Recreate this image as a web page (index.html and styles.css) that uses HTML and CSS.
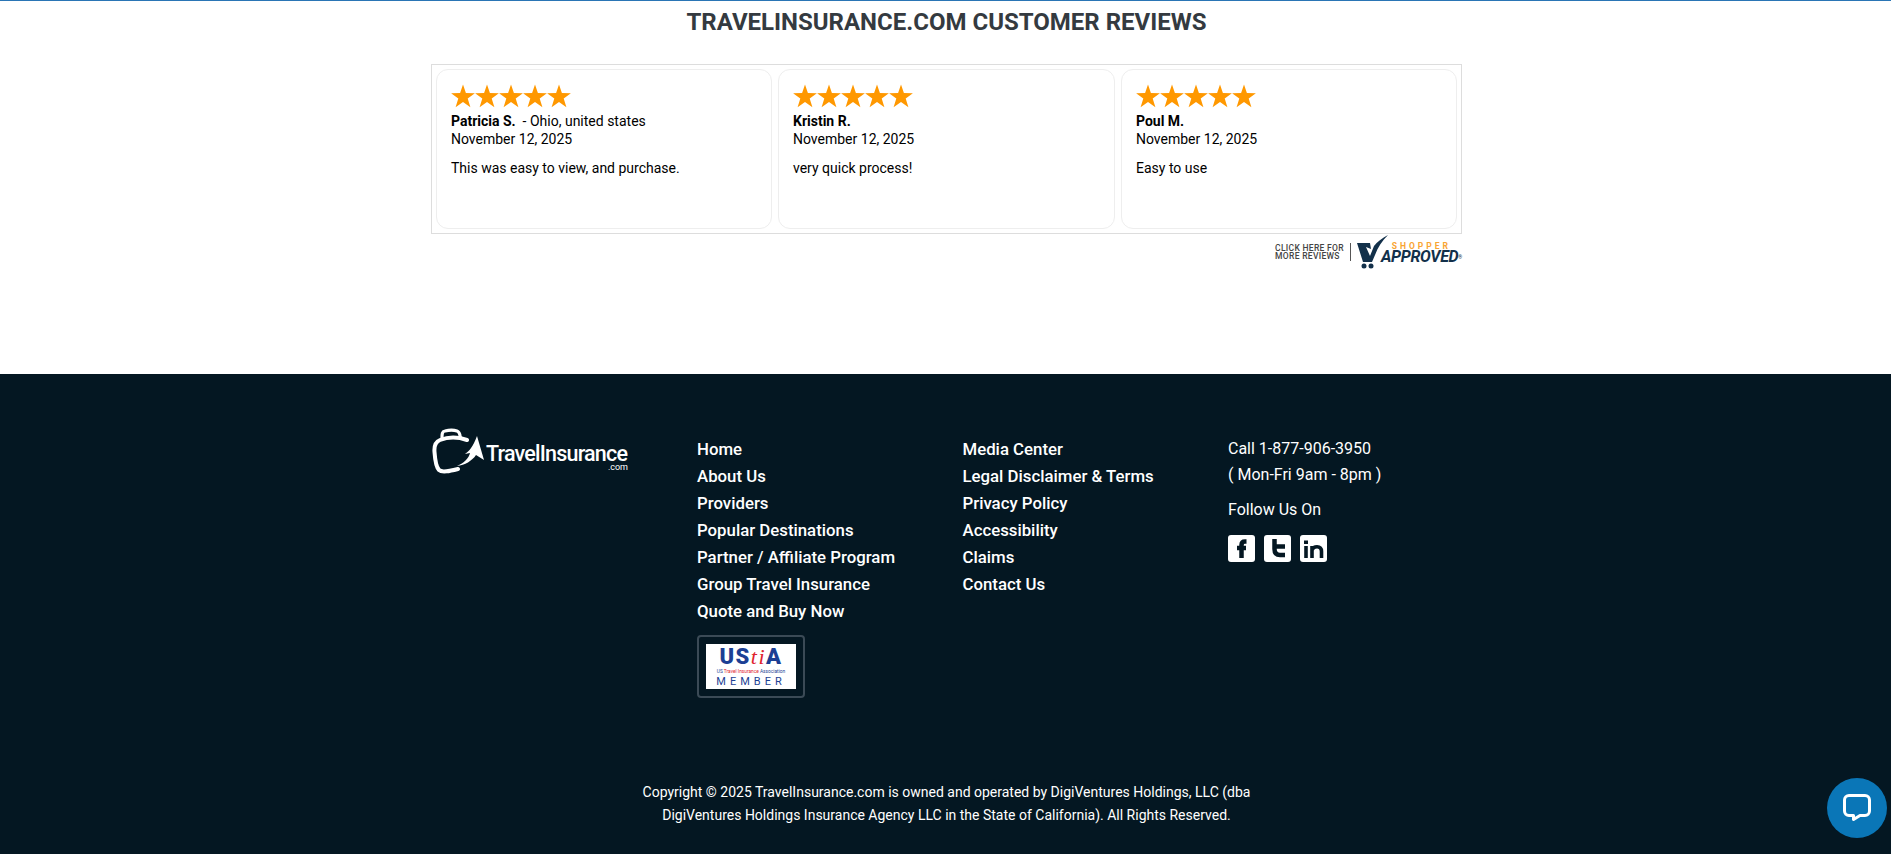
FILE: index.html
```html
<!DOCTYPE html>
<html lang="en">
<head>
    <meta charset="UTF-8">
    <meta name="viewport" content="width=device-width, initial-scale=1.0">
    <title>TravelInsurance.com</title>
    <link rel="stylesheet" href="styles.css">
</head>
<body>

<svg width="0" height="0" class="svg-defs">
    <symbol id="star" viewBox="0 0 24 24">
        <path d="M12 .6l2.9 8.5 9 .1-7.2 5.4 2.7 8.7L12 18.1l-7.4 5.2 2.7-8.7L.1 9.2l9-.1z"/>
    </symbol>
</svg>

<!-- Reviews -->
<section class="reviews">
    <h2 class="reviews-title">TRAVELINSURANCE.COM CUSTOMER REVIEWS</h2>

    <div class="reviews-box">
        <div class="review-card">
            <div class="stars">
                <svg><use href="#star"/></svg><svg><use href="#star"/></svg><svg><use href="#star"/></svg><svg><use href="#star"/></svg><svg><use href="#star"/></svg>
            </div>
            <div class="review-line"><b>Patricia S.</b>&nbsp; - Ohio, united states</div>
            <div class="review-line">November 12, 2025</div>
            <p class="review-text">This was easy to view, and purchase.</p>
        </div>
        <div class="review-card">
            <div class="stars">
                <svg><use href="#star"/></svg><svg><use href="#star"/></svg><svg><use href="#star"/></svg><svg><use href="#star"/></svg><svg><use href="#star"/></svg>
            </div>
            <div class="review-line"><b>Kristin R.</b></div>
            <div class="review-line">November 12, 2025</div>
            <p class="review-text">very quick process!</p>
        </div>
        <div class="review-card">
            <div class="stars">
                <svg><use href="#star"/></svg><svg><use href="#star"/></svg><svg><use href="#star"/></svg><svg><use href="#star"/></svg><svg><use href="#star"/></svg>
            </div>
            <div class="review-line"><b>Poul M.</b></div>
            <div class="review-line">November 12, 2025</div>
            <p class="review-text">Easy to use</p>
        </div>
    </div>

    <!-- Shopper Approved badge -->
    <a href="#" class="approved">
        <span class="approved-click">CLICK HERE FOR<br>MORE REVIEWS</span>
        <span class="approved-sep"></span>
        <svg class="approved-mark" width="32" height="34" viewBox="0 0 32 34">
            <path d="M0 8H13L14 14 9 12 13 21 17 11C20 7 25 3 31 0 25 6 21 12 18 20L15 27H6Z" fill="#12304a"/>
            <circle cx="7" cy="31" r="2.500" fill="#12304a"/>
            <circle cx="14" cy="31" r="2.500" fill="#12304a"/>
        </svg>
        <span class="approved-name">
            <span class="approved-shopper">SHOPPER</span>
            <span class="approved-word">APPROVED<sup>®</sup></span>
        </span>
    </a>
</section>

<!-- Footer -->
<footer class="site-footer">
    <div class="footer-grid">
        <div class="footer-logo">
            <svg width="200" height="48" viewBox="0 0 200 48" fill="none">
                <path d="M35 13C26 10 16 10 8 13 3 15 2 19 2.500 25 3 32 4 40 7 43 10 46 18 44 26 42" stroke="#fff" stroke-width="4" stroke-linecap="round"/>
                <path d="M10 10.700C10 7 10 4.500 13 4 17 3 22 3 25 4 28 5 28 8 28.300 10.700" stroke="#fff" stroke-width="3.200" stroke-linecap="round"/>
                <path d="M45 9L52 33 44 28C40 34 33 38 25 39 32 36 37 31 38 26L33 27C37 24 41 20 45 9Z" fill="#fff"/>
                <text class="logo-name" x="54" y="34" textLength="142">TravelInsurance</text>
                <text class="logo-com" x="196" y="43" text-anchor="end">.com</text>
            </svg>
        </div>

        <ul class="footer-links">
            <li><a href="#">Home</a></li>
            <li><a href="#">About Us</a></li>
            <li><a href="#">Providers</a></li>
            <li><a href="#">Popular Destinations</a></li>
            <li><a href="#">Partner / Affiliate Program</a></li>
            <li><a href="#">Group Travel Insurance</a></li>
            <li><a href="#">Quote and Buy Now</a></li>
            <li class="ustia-row">
                <a href="#" class="ustia">
                    <span class="ustia-inner">
                        <span class="ustia-name">US<i>ti</i>A</span>
                        <span class="ustia-sub">US <em>Travel Insurance</em> Association</span>
                        <span class="ustia-member">MEMBER</span>
                    </span>
                </a>
            </li>
        </ul>

        <ul class="footer-links">
            <li><a href="#">Media Center</a></li>
            <li><a href="#">Legal Disclaimer &amp; Terms</a></li>
            <li><a href="#">Privacy Policy</a></li>
            <li><a href="#">Accessibility</a></li>
            <li><a href="#">Claims</a></li>
            <li><a href="#">Contact Us</a></li>
        </ul>

        <div class="footer-contact">
            <p class="contact-phone">Call 1-877-906-3950<br>( Mon-Fri 9am - 8pm )</p>
            <p class="contact-follow">Follow Us On</p>
            <div class="social">
                <a href="#" class="social-icon">
                    <svg width="27" height="27" viewBox="0 0 27 27" fill="none" stroke="#041722" stroke-width="4.500">
                        <path d="M18.500 6.500H17C14.500 6.500 13.500 7.500 13.500 10V23"/>
                        <path d="M9 13H18"/>
                    </svg>
                </a>
                <a href="#" class="social-icon">
                    <svg width="27" height="27" viewBox="0 0 27 27" fill="none" stroke="#041722" stroke-width="4.500">
                        <path d="M10.500 4V14C10.500 18 12.500 20 16 20H21"/>
                        <path d="M10.500 11.500H21"/>
                    </svg>
                </a>
                <a href="#" class="social-icon">
                    <svg width="27" height="27" viewBox="0 0 27 27" fill="none" stroke="#041722" stroke-width="3.600">
                        <path d="M6 11V23"/>
                        <path d="M6 5.500V9" stroke-width="4"/>
                        <path d="M12 23V11M12 15C13 12.500 15 11.800 17 11.800 20 11.800 21.500 13.500 21.500 16.500V23"/>
                    </svg>
                </a>
            </div>
        </div>
    </div>

    <p class="copyright">Copyright © 2025 TravelInsurance.com is owned and operated by DigiVentures Holdings, LLC (dba DigiVentures Holdings Insurance Agency LLC in the State of California). All Rights Reserved.</p>
</footer>

<!-- Chat widget -->
<a href="#" class="chat-btn">
    <svg width="30" height="30" viewBox="0 0 30 30" fill="none">
        <path d="M7 2.500H23A4.500 4.500 0 0 1 27.500 7V18A4.500 4.500 0 0 1 23 22.500H18L11.500 26.500V22.500H7A4.500 4.500 0 0 1 2.500 18V7A4.500 4.500 0 0 1 7 2.500Z" stroke="#fff" stroke-width="3" stroke-linejoin="round"/>
    </svg>
</a>

</body>
</html>
```

FILE: styles.css
```css
* {
    box-sizing: border-box;
}

body {
    margin: 0;
    font-family: Roboto, "Liberation Sans", sans-serif;
    font-size: 14px;
    color: #000;
    background-color: #fff;
    border-top: 1px solid #2a75b5;
}

a {
    color: inherit;
    text-decoration: none;
}

ul {
    list-style: none;
    margin: 0;
    padding: 0;
}

.svg-defs {
    position: absolute;
}

/* reviews */
.reviews {
    width: 1033px;
    height: 373px;
    margin: 0 auto;
    padding-left: 2px;
}

.reviews-title {
    margin: 0;
    padding-top: 7px;
    height: 63px;
    font-size: 24px;
    line-height: 29px;
    font-weight: 700;
    text-align: center;
    color: #343a40;
}

.reviews-box {
    display: grid;
    grid-template-columns: 336px 337px 336px;
    gap: 6px;
    height: 170px;
    padding: 4px;
    border: 1px solid #ddd;
}

.review-card {
    padding: 14px 14px;
    border: 1px solid #eee;
    border-radius: 12px;
}

.stars {
    display: flex;
    height: 24px;
    margin-bottom: 4px;
    fill: #ff9800;
}

.stars svg {
    width: 24px;
    height: 24px;
}

.review-line {
    line-height: 18px;
}

.review-text {
    margin: 11px 0 0;
    line-height: 18px;
}

/* shopper approved */
.approved {
    display: flex;
    justify-content: flex-end;
    align-items: center;
    height: 36px;
}

.approved-click {
    font-size: 8.500px;
    line-height: 8px;
    font-weight: 500;
    letter-spacing: 0.3px;
    color: #444;
}

.approved-sep {
    width: 1px;
    height: 18px;
    margin: 0 6px;
    background-color: #555;
}

.approved-mark {
    margin-right: -8px;
}

.approved-name {
    display: flex;
    flex-direction: column;
    align-items: flex-end;
    padding-top: 2px;
}

.approved-shopper {
    margin-right: 11px;
    font-size: 8.500px;
    line-height: 8px;
    font-weight: 700;
    letter-spacing: 3px;
    color: #f9a533;
}

.approved-word {
    font-size: 16px;
    line-height: 14px;
    font-weight: 700;
    font-style: italic;
    letter-spacing: -0.3px;
    color: #12304a;
}

.approved-word sup {
    font-size: 5px;
    font-style: normal;
    vertical-align: top;
}

/* footer */
.site-footer {
    height: 480px;
    padding-top: 53px;
    background-color: #041722;
    color: #fff;
}

.footer-grid {
    display: grid;
    grid-template-columns: repeat(4, 265.5px);
    width: 1062px;
    height: 354px;
    margin: 0 auto;
    padding-left: 17px;
}

.footer-logo {
    height: 48px;
}

.logo-name {
    font-size: 21.500px;
    font-weight: 500;
    fill: #fff;
}

.logo-com {
    font-size: 9px;
    fill: #fff;
}

.footer-links {
    padding-top: 9px;
}

.footer-links li {
    font-size: 16.800px;
    line-height: 27px;
    font-weight: 500;
}

.footer-links .ustia-row {
    margin-top: 10px;
    line-height: 0;
}

.ustia {
    display: inline-block;
    width: 108px;
    height: 63px;
    padding: 7px;
    border: 2px solid #3b4a56;
    border-radius: 4px;
}

.ustia-inner {
    display: flex;
    flex-direction: column;
    align-items: center;
    height: 45px;
    background-color: #fff;
    color: #1c3f94;
}

.ustia-name {
    font-size: 22px;
    line-height: 25px;
    font-weight: 900;
    letter-spacing: 1.500px;
}

.ustia-name i {
    font-family: "Liberation Serif", serif;
    font-weight: 400;
    color: #e0232e;
}

.ustia-sub {
    font-size: 4.800px;
    line-height: 6px;
    font-weight: 400;
    white-space: nowrap;
}

.ustia-sub em {
    font-style: normal;
    color: #e0232e;
}

.ustia-member {
    font-size: 11px;
    line-height: 13px;
    font-weight: 400;
    letter-spacing: 4px;
}

.footer-contact {
    padding-top: 9px;
    font-size: 16px;
}

.contact-phone {
    margin: 0;
    line-height: 26px;
}

.contact-follow {
    margin: 9px 0 0;
    line-height: 26px;
}

.social {
    display: flex;
    gap: 9px;
    margin-top: 12px;
}

.social-icon {
    display: block;
    width: 27px;
    height: 27px;
    border-radius: 3px;
    background-color: #fff;
}

.social-icon svg {
    display: block;
}

.copyright {
    width: 642px;
    margin: 0 auto;
    padding-left: 2px;
    font-size: 14px;
    line-height: 23px;
    text-align: center;
}

/* chat button */
.chat-btn {
    position: fixed;
    right: 4px;
    bottom: 16px;
    display: flex;
    justify-content: center;
    align-items: center;
    width: 60px;
    height: 60px;
    border-radius: 50%;
    background-color: #0a76b7;
}
```
